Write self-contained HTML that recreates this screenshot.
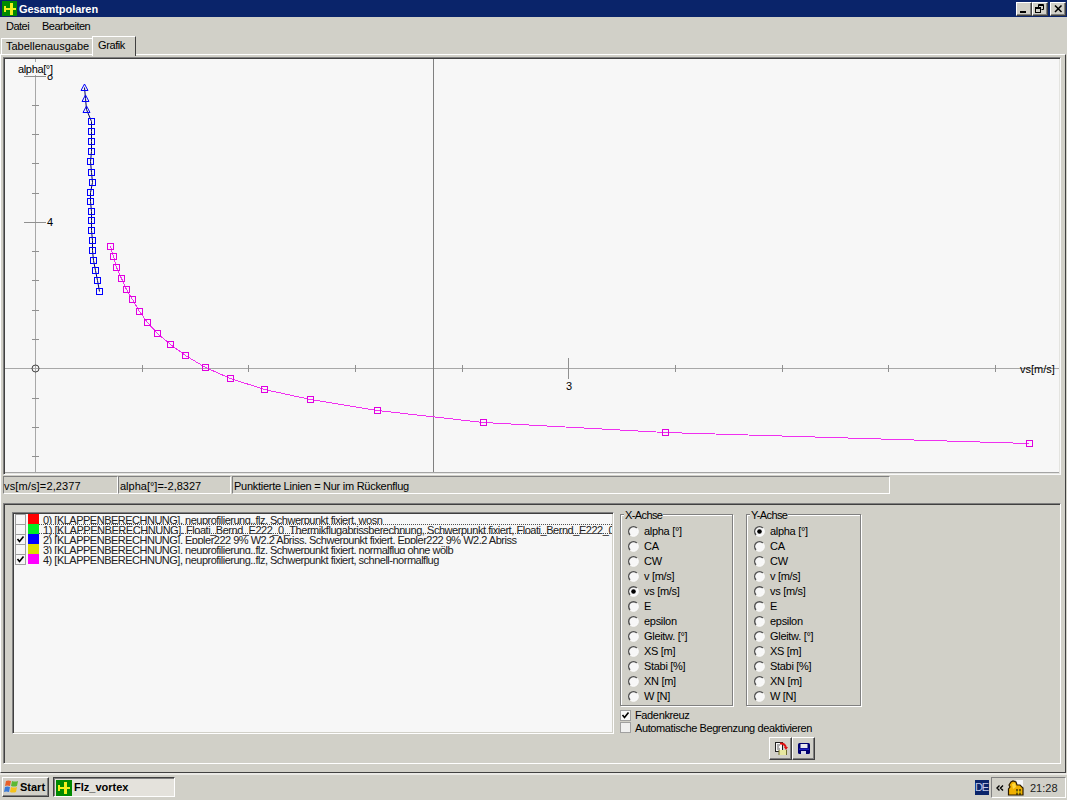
<!DOCTYPE html>
<html><head><meta charset="utf-8">
<style>
*{margin:0;padding:0;box-sizing:border-box}
html,body{width:1067px;height:800px;overflow:hidden;background:#d1d0c8;font-family:"Liberation Sans",sans-serif;font-size:11px;color:#000;position:relative}
.a{position:absolute}
.t{position:absolute;white-space:nowrap;line-height:13px}
#title{left:0;top:0;width:1067px;height:17px;background:#0a246a}
.wb{position:absolute;top:2px;width:16px;height:14px;background:#d1d0c8;border-top:1px solid #fff;border-left:1px solid #fff;border-right:1px solid #404040;border-bottom:1px solid #404040;box-shadow:inset -1px -1px 0 #808080}
.sunk{border-top:1px solid #808080;border-left:1px solid #808080;border-bottom:1px solid #fff;border-right:1px solid #fff}
.raised{border-top:1px solid #fff;border-left:1px solid #fff;border-bottom:1px solid #404040;border-right:1px solid #404040}
.radio{position:absolute;width:12px;height:12px}
</style></head><body>
<!-- window frame -->
<div id="title" class="a">
  <svg class="a" style="left:2px;top:1px" width="15" height="15"><rect x="0" y="0" width="15" height="15" fill="#008a00"/><rect x="8" y="2" width="3" height="12" fill="#f0f020"/><rect x="2" y="7" width="12" height="2" fill="#f0f020"/><rect x="2" y="5" width="2" height="6" fill="#f0f020"/></svg>
  <div class="t" style="left:19px;top:3px;color:#fff;font-weight:bold;font-size:11px;letter-spacing:-0.08px">Gesamtpolaren</div>
  <div class="wb" style="left:1016px"><div class="a" style="left:3px;top:8px;width:6px;height:2px;background:#000"></div></div>
  <div class="wb" style="left:1032px"><svg class="a" style="left:2px;top:1px" width="10" height="10"><path d="M3.5 3 V0.5 H8.5 V5.5 H6.5" fill="none" stroke="#000"/><path d="M3 1.5 H8" stroke="#000"/><rect x="0.5" y="3.5" width="5" height="5" fill="none" stroke="#000"/><path d="M0 4.5 H6" stroke="#000"/></svg></div>
  <div class="wb" style="left:1050px"><svg class="a" style="left:3px;top:2px" width="9" height="8"><path d="M1 0.5 L7.5 7 M7.5 0.5 L1 7" stroke="#000" stroke-width="1.5"/></svg></div>
</div>
<!-- menu -->
<div class="t" style="left:6px;top:20px;letter-spacing:-0.5px">Datei</div>
<div class="t" style="left:42px;top:20px;letter-spacing:-0.5px">Bearbeiten</div>
<!-- tab panel -->
<div class="a" style="left:0px;top:54px;width:1066px;height:719px;border-top:1px solid #fff;border-left:1px solid #fff;border-right:1px solid #404040;border-bottom:1px solid #404040"></div>
<!-- tabs -->
<div class="a" style="left:1px;top:38px;width:91px;height:17px;border-top:1px solid #fff;border-left:1px solid #fff"></div>
<div class="t" style="left:6px;top:40px">Tabellenausgabe</div>
<div class="a" style="left:92px;top:36px;width:44px;height:20px;background:#d1d0c8;border-top:1px solid #fff;border-left:1px solid #fff;border-right:1px solid #404040"></div>
<div class="t" style="left:98px;top:39px;letter-spacing:-0.4px">Grafik</div>
<!-- plot -->
<div class="a" style="left:3px;top:57px;width:1058px;height:418px;background:#f7f7f7;border-top:1px solid #808080;border-left:1px solid #808080;border-right:1px solid #fafafa;border-bottom:1px solid #fafafa;box-shadow:inset 1px 1px 0 #404040, inset -1px -1px 0 #e4e4e0"></div>
<svg class="a" style="left:0;top:0" width="1067" height="800" viewBox="0 0 1067 800" font-family="Liberation Sans, sans-serif"><defs><clipPath id="pc"><rect x="5" y="59" width="1054" height="414"/></clipPath></defs><g clip-path="url(#pc)">
<g stroke="#a8a8a8" stroke-width="1" shape-rendering="crispEdges">
<line x1="35.5" y1="59" x2="35.5" y2="473"/>
<line x1="5" y1="368.5" x2="1060" y2="368.5"/>
</g>
<line x1="433.5" y1="59" x2="433.5" y2="473" stroke="#808080" shape-rendering="crispEdges"/>
<line x1="5" y1="472.5" x2="1059" y2="472.5" stroke="#a4a4a4" shape-rendering="crispEdges"/>
<g stroke="#909090" shape-rendering="crispEdges">
<line x1="32" y1="105.5" x2="39" y2="105.5"/>
<line x1="32" y1="134.5" x2="39" y2="134.5"/>
<line x1="32" y1="163.5" x2="39" y2="163.5"/>
<line x1="32" y1="193.5" x2="39" y2="193.5"/>
<line x1="32" y1="251.5" x2="39" y2="251.5"/>
<line x1="32" y1="280.5" x2="39" y2="280.5"/>
<line x1="32" y1="310.5" x2="39" y2="310.5"/>
<line x1="32" y1="339.5" x2="39" y2="339.5"/>
<line x1="32" y1="398.5" x2="39" y2="398.5"/>
<line x1="32" y1="427.5" x2="39" y2="427.5"/>
<line x1="32" y1="456.5" x2="39" y2="456.5"/>
<line x1="24" y1="76.5" x2="46" y2="76.5"/>
<line x1="24" y1="222.5" x2="46" y2="222.5"/>
<line x1="142.5" y1="365" x2="142.5" y2="372"/>
<line x1="248.5" y1="365" x2="248.5" y2="372"/>
<line x1="355.5" y1="365" x2="355.5" y2="372"/>
<line x1="462.5" y1="365" x2="462.5" y2="372"/>
<line x1="675.5" y1="365" x2="675.5" y2="372"/>
<line x1="782.5" y1="365" x2="782.5" y2="372"/>
<line x1="888.5" y1="365" x2="888.5" y2="372"/>
<line x1="995.5" y1="365" x2="995.5" y2="372"/>
<line x1="568.5" y1="358" x2="568.5" y2="379"/>
</g>
<circle cx="35.5" cy="368.5" r="3.5" fill="none" stroke="#404040"/>
<text x="47" y="80" font-size="11" fill="#000">8</text>
<rect x="17" y="62" width="36" height="13" fill="#f7f7f7"/>
<text x="18" y="73" font-size="11" fill="#000" letter-spacing="-0.35">alpha[°]</text>
<text x="47" y="226" font-size="11" fill="#000">4</text>
<text x="566" y="390" font-size="11" fill="#000">3</text>
<text x="1020" y="373" font-size="11" fill="#000">vs[m/s]</text>
<polyline fill="none" stroke="#000060" stroke-width="1" points="84.5,87.5 85.5,98.5 86.5,109.5 91.5,121.5 91.5,131.5 91.5,141.5 91.5,151.5 90.5,161.5 91.5,172.5 92.5,182.5 90.5,192.5 90.5,201.5 91.5,211.5 91.5,220.5 91.5,230.5 92.5,240.5 92.5,250.5 93.5,260.5 95.5,270.5 97.5,280.5 99.5,291.5"/>
<g fill="none" stroke="#0000ff" stroke-width="1" shape-rendering="crispEdges">
<rect x="88.5" y="118.5" width="6" height="6"/>
<rect x="88.5" y="128.5" width="6" height="6"/>
<rect x="88.5" y="138.5" width="6" height="6"/>
<rect x="88.5" y="148.5" width="6" height="6"/>
<rect x="87.5" y="158.5" width="6" height="6"/>
<rect x="88.5" y="169.5" width="6" height="6"/>
<rect x="89.5" y="179.5" width="6" height="6"/>
<rect x="87.5" y="189.5" width="6" height="6"/>
<rect x="87.5" y="198.5" width="6" height="6"/>
<rect x="88.5" y="208.5" width="6" height="6"/>
<rect x="88.5" y="217.5" width="6" height="6"/>
<rect x="88.5" y="227.5" width="6" height="6"/>
<rect x="89.5" y="237.5" width="6" height="6"/>
<rect x="89.5" y="247.5" width="6" height="6"/>
<rect x="90.5" y="257.5" width="6" height="6"/>
<rect x="92.5" y="267.5" width="6" height="6"/>
<rect x="94.5" y="277.5" width="6" height="6"/>
<rect x="96.5" y="288.5" width="6" height="6"/>
</g>
<g fill="none" stroke="#0000ff" stroke-width="1">
<polygon points="84.5,84.0 81.0,90.5 88.0,90.5"/>
<polygon points="85.5,95.0 82.0,101.5 89.0,101.5"/>
<polygon points="86.5,106.0 83.0,112.5 90.0,112.5"/>
</g>
<g fill="none" stroke="#e000e0" stroke-width="1" shape-rendering="crispEdges">
<polyline fill="none" stroke="#f030f0" stroke-width="1" points="110.5,246.5 113.5,256.5 116.5,267.5 121.5,278.5 126.5,289.5 132.5,299.5 139.5,311.5 147.5,322.5 157.5,333.5 170.5,344.5 185.5,355.5 205.5,367.5 230.5,378.5 264.5,389.5 310.5,399.5 377.5,410.5 483.5,422.5 665.5,432.5 1029.5,443.5"/>
<rect x="107.5" y="243.5" width="6" height="6"/>
<rect x="110.5" y="253.5" width="6" height="6"/>
<rect x="113.5" y="264.5" width="6" height="6"/>
<rect x="118.5" y="275.5" width="6" height="6"/>
<rect x="123.5" y="286.5" width="6" height="6"/>
<rect x="129.5" y="296.5" width="6" height="6"/>
<rect x="136.5" y="308.5" width="6" height="6"/>
<rect x="144.5" y="319.5" width="6" height="6"/>
<rect x="154.5" y="330.5" width="6" height="6"/>
<rect x="167.5" y="341.5" width="6" height="6"/>
<rect x="182.5" y="352.5" width="6" height="6"/>
<rect x="202.5" y="364.5" width="6" height="6"/>
<rect x="227.5" y="375.5" width="6" height="6"/>
<rect x="261.5" y="386.5" width="6" height="6"/>
<rect x="307.5" y="396.5" width="6" height="6"/>
<rect x="374.5" y="407.5" width="6" height="6"/>
<rect x="480.5" y="419.5" width="6" height="6"/>
<rect x="662.5" y="429.5" width="6" height="6"/>
<rect x="1026.5" y="440.5" width="6" height="6"/>
</g>
</g></svg>
<!-- status panels -->
<div class="a sunk" style="left:3px;top:476px;width:115px;height:18px"></div>
<div class="t" style="left:4px;top:480px;letter-spacing:0.14px">vs[m/s]=2,2377</div>
<div class="a sunk" style="left:118px;top:476px;width:113px;height:18px"></div>
<div class="t" style="left:120px;top:480px">alpha[°]=-2,8327</div>
<div class="a sunk" style="left:232px;top:476px;width:658px;height:18px"></div>
<div class="t" style="left:234px;top:480px;letter-spacing:-0.27px">Punktierte Linien = Nur im Rückenflug</div>
<!-- bottom panel -->
<div class="a" style="left:3px;top:503px;width:1058px;height:261px;border-top:1px solid #808080;border-left:1px solid #808080;border-right:1px solid #fff;border-bottom:1px solid #fff;box-shadow:inset 1px 1px 0 #404040"></div>
<!-- list box -->
<div class="a" style="left:12px;top:512px;width:602px;height:222px;background:#f7f7f7;border-top:1px solid #808080;border-left:1px solid #808080;border-right:1px solid #fff;border-bottom:1px solid #fff;box-shadow:inset 1px 1px 0 #404040, inset -1px -1px 0 #d1d0c8"></div>
<div class="a" style="left:14px;top:514px;width:598px;height:218px;overflow:hidden">
<div class="a" style="left:1px;top:0px;width:11px;height:11px;border:1px solid #a0a0a0;background:#f7f7f7"></div>
<div class="a" style="left:14px;top:0px;width:11px;height:10px;background:#ff0000"></div>
<div class="a" style="left:1px;top:10px;width:11px;height:11px;border:1px solid #a0a0a0;background:#f7f7f7"></div>
<div class="a" style="left:14px;top:10px;width:11px;height:10px;background:#00ee22"></div>
<div class="a" style="left:1px;top:20px;width:11px;height:11px;border:1px solid #a0a0a0;background:#f7f7f7"></div>
<svg class="a" style="left:2px;top:21px" width="9" height="9"><path d="M1.5 4 L3.5 6.5 L7.5 1.5" fill="none" stroke="#000" stroke-width="1.6"/></svg>
<div class="a" style="left:14px;top:20px;width:11px;height:10px;background:#0000ff"></div>
<div class="a" style="left:1px;top:30px;width:11px;height:11px;border:1px solid #a0a0a0;background:#f7f7f7"></div>
<div class="a" style="left:14px;top:30px;width:11px;height:10px;background:#dddd00"></div>
<div class="a" style="left:1px;top:40px;width:11px;height:11px;border:1px solid #a0a0a0;background:#f7f7f7"></div>
<svg class="a" style="left:2px;top:41px" width="9" height="9"><path d="M1.5 4 L3.5 6.5 L7.5 1.5" fill="none" stroke="#000" stroke-width="1.6"/></svg>
<div class="a" style="left:14px;top:40px;width:11px;height:10px;background:#ff00ff"></div>
<div class="a" style="left:28px;top:0px;width:570px;height:10px;overflow:hidden"><div class="t" style="left:1px;top:0px;color:#202020;letter-spacing:-0.5px">0) [KLAPPENBERECHNUNG]. neuprofilierung..flz, Schwerpunkt fixiert, wosn</div></div>
<div class="a" style="left:28px;top:10px;width:570px;height:14px;overflow:hidden"><div class="t" style="left:1px;top:0px;color:#202020;letter-spacing:-0.46px">1) [KLAPPENBERECHNUNG]. Floati_Bernd_E222_0_Thermikflugabrissberechnung, Schwerpunkt fixiert, Floati_Bernd_E222_0_Thermikflug</div></div>
<div class="a" style="left:28px;top:20px;width:570px;height:10px;overflow:hidden"><div class="t" style="left:1px;top:0px;color:#202020;letter-spacing:-0.5px">2) [KLAPPENBERECHNUNG]. Eppler222 9% W2,2 Abriss, Schwerpunkt fixiert, Eppler222 9% W2,2 Abriss</div></div>
<div class="a" style="left:28px;top:30px;width:570px;height:10px;overflow:hidden"><div class="t" style="left:1px;top:0px;color:#202020;letter-spacing:-0.5px">3) [KLAPPENBERECHNUNG]. neuprofilierung..flz, Schwerpunkt fixiert, normalflug ohne wölb</div></div>
<div class="a" style="left:28px;top:40px;width:570px;height:14px;overflow:hidden"><div class="t" style="left:1px;top:0px;color:#202020;letter-spacing:-0.5px">4) [KLAPPENBERECHNUNG], neuprofilierung..flz, Schwerpunkt fixiert, schnell-normalflug</div></div>
<div class="a" style="left:25px;top:10px;width:573px;height:10px;border-top:1px dotted #505050;border-bottom:1px dotted #505050"></div>
</div>
<div class="a" style="left:620px;top:514px;width:113px;height:192px;border:1px solid #808080;box-shadow:inset 1px 1px 0 #fff, 1px 1px 0 #fff"></div>
<div class="t" style="left:624px;top:509px;background:#d1d0c8;padding:0 1px;letter-spacing:-0.6px">X-Achse</div>
<svg class="a" style="left:620px;top:520px" width="30" height="190">
<circle cx="13.5" cy="11.5" r="4.8" fill="#f7f7f7"/>
<path d="M10.1 14.9 A4.8 4.8 0 0 1 16.9 8.1" fill="none" stroke="#505050" stroke-width="1.4"/>
<path d="M16.9 8.1 A4.8 4.8 0 0 1 10.1 14.9" fill="none" stroke="#ffffff" stroke-width="1"/>
<circle cx="13.5" cy="26.5" r="4.8" fill="#f7f7f7"/>
<path d="M10.1 29.9 A4.8 4.8 0 0 1 16.9 23.1" fill="none" stroke="#505050" stroke-width="1.4"/>
<path d="M16.9 23.1 A4.8 4.8 0 0 1 10.1 29.9" fill="none" stroke="#ffffff" stroke-width="1"/>
<circle cx="13.5" cy="41.5" r="4.8" fill="#f7f7f7"/>
<path d="M10.1 44.9 A4.8 4.8 0 0 1 16.9 38.1" fill="none" stroke="#505050" stroke-width="1.4"/>
<path d="M16.9 38.1 A4.8 4.8 0 0 1 10.1 44.9" fill="none" stroke="#ffffff" stroke-width="1"/>
<circle cx="13.5" cy="56.5" r="4.8" fill="#f7f7f7"/>
<path d="M10.1 59.9 A4.8 4.8 0 0 1 16.9 53.1" fill="none" stroke="#505050" stroke-width="1.4"/>
<path d="M16.9 53.1 A4.8 4.8 0 0 1 10.1 59.9" fill="none" stroke="#ffffff" stroke-width="1"/>
<circle cx="13.5" cy="71.5" r="4.8" fill="#f7f7f7"/>
<path d="M10.1 74.9 A4.8 4.8 0 0 1 16.9 68.1" fill="none" stroke="#505050" stroke-width="1.4"/>
<path d="M16.9 68.1 A4.8 4.8 0 0 1 10.1 74.9" fill="none" stroke="#ffffff" stroke-width="1"/>
<circle cx="13.5" cy="71.5" r="2.3" fill="#000"/>
<circle cx="13.5" cy="86.5" r="4.8" fill="#f7f7f7"/>
<path d="M10.1 89.9 A4.8 4.8 0 0 1 16.9 83.1" fill="none" stroke="#505050" stroke-width="1.4"/>
<path d="M16.9 83.1 A4.8 4.8 0 0 1 10.1 89.9" fill="none" stroke="#ffffff" stroke-width="1"/>
<circle cx="13.5" cy="101.5" r="4.8" fill="#f7f7f7"/>
<path d="M10.1 104.9 A4.8 4.8 0 0 1 16.9 98.1" fill="none" stroke="#505050" stroke-width="1.4"/>
<path d="M16.9 98.1 A4.8 4.8 0 0 1 10.1 104.9" fill="none" stroke="#ffffff" stroke-width="1"/>
<circle cx="13.5" cy="116.5" r="4.8" fill="#f7f7f7"/>
<path d="M10.1 119.9 A4.8 4.8 0 0 1 16.9 113.1" fill="none" stroke="#505050" stroke-width="1.4"/>
<path d="M16.9 113.1 A4.8 4.8 0 0 1 10.1 119.9" fill="none" stroke="#ffffff" stroke-width="1"/>
<circle cx="13.5" cy="131.5" r="4.8" fill="#f7f7f7"/>
<path d="M10.1 134.9 A4.8 4.8 0 0 1 16.9 128.1" fill="none" stroke="#505050" stroke-width="1.4"/>
<path d="M16.9 128.1 A4.8 4.8 0 0 1 10.1 134.9" fill="none" stroke="#ffffff" stroke-width="1"/>
<circle cx="13.5" cy="146.5" r="4.8" fill="#f7f7f7"/>
<path d="M10.1 149.9 A4.8 4.8 0 0 1 16.9 143.1" fill="none" stroke="#505050" stroke-width="1.4"/>
<path d="M16.9 143.1 A4.8 4.8 0 0 1 10.1 149.9" fill="none" stroke="#ffffff" stroke-width="1"/>
<circle cx="13.5" cy="161.5" r="4.8" fill="#f7f7f7"/>
<path d="M10.1 164.9 A4.8 4.8 0 0 1 16.9 158.1" fill="none" stroke="#505050" stroke-width="1.4"/>
<path d="M16.9 158.1 A4.8 4.8 0 0 1 10.1 164.9" fill="none" stroke="#ffffff" stroke-width="1"/>
<circle cx="13.5" cy="176.5" r="4.8" fill="#f7f7f7"/>
<path d="M10.1 179.9 A4.8 4.8 0 0 1 16.9 173.1" fill="none" stroke="#505050" stroke-width="1.4"/>
<path d="M16.9 173.1 A4.8 4.8 0 0 1 10.1 179.9" fill="none" stroke="#ffffff" stroke-width="1"/>
</svg>
<div class="t" style="left:644px;top:524.5px;letter-spacing:-0.3px">alpha [°]</div>
<div class="t" style="left:644px;top:539.5px;letter-spacing:-0.3px">CA</div>
<div class="t" style="left:644px;top:554.5px;letter-spacing:-0.3px">CW</div>
<div class="t" style="left:644px;top:569.5px;letter-spacing:-0.3px">v [m/s]</div>
<div class="t" style="left:644px;top:584.5px;letter-spacing:-0.3px">vs [m/s]</div>
<div class="t" style="left:644px;top:599.5px;letter-spacing:-0.3px">E</div>
<div class="t" style="left:644px;top:614.5px;letter-spacing:-0.3px">epsilon</div>
<div class="t" style="left:644px;top:629.5px;letter-spacing:-0.3px">Gleitw. [°]</div>
<div class="t" style="left:644px;top:644.5px;letter-spacing:-0.3px">XS [m]</div>
<div class="t" style="left:644px;top:659.5px;letter-spacing:-0.3px">Stabi [%]</div>
<div class="t" style="left:644px;top:674.5px;letter-spacing:-0.3px">XN [m]</div>
<div class="t" style="left:644px;top:689.5px;letter-spacing:-0.3px">W [N]</div>
<div class="a" style="left:746px;top:514px;width:115px;height:192px;border:1px solid #808080;box-shadow:inset 1px 1px 0 #fff, 1px 1px 0 #fff"></div>
<div class="t" style="left:750px;top:509px;background:#d1d0c8;padding:0 1px;letter-spacing:-0.6px">Y-Achse</div>
<svg class="a" style="left:746px;top:520px" width="30" height="190">
<circle cx="13.5" cy="11.5" r="4.8" fill="#f7f7f7"/>
<path d="M10.1 14.9 A4.8 4.8 0 0 1 16.9 8.1" fill="none" stroke="#505050" stroke-width="1.4"/>
<path d="M16.9 8.1 A4.8 4.8 0 0 1 10.1 14.9" fill="none" stroke="#ffffff" stroke-width="1"/>
<circle cx="13.5" cy="11.5" r="2.3" fill="#000"/>
<circle cx="13.5" cy="26.5" r="4.8" fill="#f7f7f7"/>
<path d="M10.1 29.9 A4.8 4.8 0 0 1 16.9 23.1" fill="none" stroke="#505050" stroke-width="1.4"/>
<path d="M16.9 23.1 A4.8 4.8 0 0 1 10.1 29.9" fill="none" stroke="#ffffff" stroke-width="1"/>
<circle cx="13.5" cy="41.5" r="4.8" fill="#f7f7f7"/>
<path d="M10.1 44.9 A4.8 4.8 0 0 1 16.9 38.1" fill="none" stroke="#505050" stroke-width="1.4"/>
<path d="M16.9 38.1 A4.8 4.8 0 0 1 10.1 44.9" fill="none" stroke="#ffffff" stroke-width="1"/>
<circle cx="13.5" cy="56.5" r="4.8" fill="#f7f7f7"/>
<path d="M10.1 59.9 A4.8 4.8 0 0 1 16.9 53.1" fill="none" stroke="#505050" stroke-width="1.4"/>
<path d="M16.9 53.1 A4.8 4.8 0 0 1 10.1 59.9" fill="none" stroke="#ffffff" stroke-width="1"/>
<circle cx="13.5" cy="71.5" r="4.8" fill="#f7f7f7"/>
<path d="M10.1 74.9 A4.8 4.8 0 0 1 16.9 68.1" fill="none" stroke="#505050" stroke-width="1.4"/>
<path d="M16.9 68.1 A4.8 4.8 0 0 1 10.1 74.9" fill="none" stroke="#ffffff" stroke-width="1"/>
<circle cx="13.5" cy="86.5" r="4.8" fill="#f7f7f7"/>
<path d="M10.1 89.9 A4.8 4.8 0 0 1 16.9 83.1" fill="none" stroke="#505050" stroke-width="1.4"/>
<path d="M16.9 83.1 A4.8 4.8 0 0 1 10.1 89.9" fill="none" stroke="#ffffff" stroke-width="1"/>
<circle cx="13.5" cy="101.5" r="4.8" fill="#f7f7f7"/>
<path d="M10.1 104.9 A4.8 4.8 0 0 1 16.9 98.1" fill="none" stroke="#505050" stroke-width="1.4"/>
<path d="M16.9 98.1 A4.8 4.8 0 0 1 10.1 104.9" fill="none" stroke="#ffffff" stroke-width="1"/>
<circle cx="13.5" cy="116.5" r="4.8" fill="#f7f7f7"/>
<path d="M10.1 119.9 A4.8 4.8 0 0 1 16.9 113.1" fill="none" stroke="#505050" stroke-width="1.4"/>
<path d="M16.9 113.1 A4.8 4.8 0 0 1 10.1 119.9" fill="none" stroke="#ffffff" stroke-width="1"/>
<circle cx="13.5" cy="131.5" r="4.8" fill="#f7f7f7"/>
<path d="M10.1 134.9 A4.8 4.8 0 0 1 16.9 128.1" fill="none" stroke="#505050" stroke-width="1.4"/>
<path d="M16.9 128.1 A4.8 4.8 0 0 1 10.1 134.9" fill="none" stroke="#ffffff" stroke-width="1"/>
<circle cx="13.5" cy="146.5" r="4.8" fill="#f7f7f7"/>
<path d="M10.1 149.9 A4.8 4.8 0 0 1 16.9 143.1" fill="none" stroke="#505050" stroke-width="1.4"/>
<path d="M16.9 143.1 A4.8 4.8 0 0 1 10.1 149.9" fill="none" stroke="#ffffff" stroke-width="1"/>
<circle cx="13.5" cy="161.5" r="4.8" fill="#f7f7f7"/>
<path d="M10.1 164.9 A4.8 4.8 0 0 1 16.9 158.1" fill="none" stroke="#505050" stroke-width="1.4"/>
<path d="M16.9 158.1 A4.8 4.8 0 0 1 10.1 164.9" fill="none" stroke="#ffffff" stroke-width="1"/>
<circle cx="13.5" cy="176.5" r="4.8" fill="#f7f7f7"/>
<path d="M10.1 179.9 A4.8 4.8 0 0 1 16.9 173.1" fill="none" stroke="#505050" stroke-width="1.4"/>
<path d="M16.9 173.1 A4.8 4.8 0 0 1 10.1 179.9" fill="none" stroke="#ffffff" stroke-width="1"/>
</svg>
<div class="t" style="left:770px;top:524.5px;letter-spacing:-0.3px">alpha [°]</div>
<div class="t" style="left:770px;top:539.5px;letter-spacing:-0.3px">CA</div>
<div class="t" style="left:770px;top:554.5px;letter-spacing:-0.3px">CW</div>
<div class="t" style="left:770px;top:569.5px;letter-spacing:-0.3px">v [m/s]</div>
<div class="t" style="left:770px;top:584.5px;letter-spacing:-0.3px">vs [m/s]</div>
<div class="t" style="left:770px;top:599.5px;letter-spacing:-0.3px">E</div>
<div class="t" style="left:770px;top:614.5px;letter-spacing:-0.3px">epsilon</div>
<div class="t" style="left:770px;top:629.5px;letter-spacing:-0.3px">Gleitw. [°]</div>
<div class="t" style="left:770px;top:644.5px;letter-spacing:-0.3px">XS [m]</div>
<div class="t" style="left:770px;top:659.5px;letter-spacing:-0.3px">Stabi [%]</div>
<div class="t" style="left:770px;top:674.5px;letter-spacing:-0.3px">XN [m]</div>
<div class="t" style="left:770px;top:689.5px;letter-spacing:-0.3px">W [N]</div>
<div class="a" style="left:620px;top:710px;width:11px;height:11px;border:1px solid #a0a0a0;background:#f7f7f7"></div>
<svg class="a" style="left:621px;top:711px" width="9" height="9"><path d="M1.5 4 L3.5 6.5 L7.5 1.5" fill="none" stroke="#000" stroke-width="1.6"/></svg>
<div class="t" style="left:635px;top:709px;letter-spacing:-0.36px">Fadenkreuz</div>
<div class="a" style="left:620px;top:722px;width:11px;height:11px;border:1px solid #a0a0a0;background:#f0f0f0"></div>
<div class="t" style="left:635px;top:722px;letter-spacing:-0.4px">Automatische Begrenzung deaktivieren</div>
<div class="a" style="left:769px;top:737px;width:23px;height:23px;background:#d1d0c8;border-top:1px solid #fff;border-left:1px solid #fff;border-right:1px solid #404040;border-bottom:1px solid #404040;box-shadow:inset -1px -1px 0 #808080"></div>
<div class="a" style="left:792px;top:737px;width:23px;height:23px;background:#d1d0c8;border-top:1px solid #fff;border-left:1px solid #fff;border-right:1px solid #404040;border-bottom:1px solid #404040;box-shadow:inset -1px -1px 0 #808080"></div>
<svg class="a" style="left:774px;top:742px" width="15" height="14"><rect x="1.5" y="0.5" width="7" height="9" fill="#f8f8f8" stroke="#202020"/><path d="M3 3h3M3 5h2M3 7h3" stroke="#606060"/><path d="M6 1.5 Q11 1 12 6" fill="none" stroke="#e01010" stroke-width="2"/><path d="M10 5 L14 5 L12 8 Z" fill="#e01010"/><rect x="5" y="8" width="8" height="5" fill="#e8e8a0"/><path d="M5 8v5M12.5 8v5" stroke="#707030"/></svg>
<svg class="a" style="left:798px;top:743px" width="12" height="12"><rect x="0" y="0" width="12" height="11" rx="1.5" fill="#000070"/><rect x="2.5" y="1" width="7" height="4" fill="#e8e8f0"/><rect x="1" y="5.5" width="10" height="1.5" fill="#2020c0"/><rect x="3" y="8" width="5" height="3" fill="#d8d8e8"/></svg>
<!-- taskbar -->
<div class="a" style="left:0;top:773px;width:1067px;height:27px;background:#d1d0c8;border-top:2px solid #ebeae6"></div>
<div class="a" style="left:2px;top:777px;width:47px;height:20px;border-top:1px solid #fff;border-left:1px solid #fff;border-right:1px solid #404040;border-bottom:1px solid #404040;box-shadow:inset -1px -1px 0 #808080"></div>
<svg class="a" style="left:4px;top:779px" width="15" height="15"><path d="M2 2 Q4 1 7 2 L6 7 Q3 6 1 7 Z" fill="#e8602a"/><path d="M8 2 Q11 3 14 2 L13 7 Q10 8 7 7 Z" fill="#5cb833"/><path d="M1 8 Q3 7 6 8 L5 13 Q2 12 0 13 Z" fill="#3a7ad8"/><path d="M7 8 Q10 9 13 8 L12 13 Q9 14 6 13 Z" fill="#f5c21a"/></svg>
<div class="t" style="left:20px;top:781px;font-weight:bold">Start</div>
<div class="a" style="left:53px;top:777px;width:122px;height:20px;background:#e4e2dc;border-top:1px solid #404040;border-left:1px solid #404040;border-right:1px solid #fff;border-bottom:1px solid #fff;box-shadow:inset 1px 1px 0 #808080"></div>
<svg class="a" style="left:56px;top:780px" width="16" height="16"><rect x="0" y="0" width="16" height="16" fill="#008a00"/><rect x="8" y="2" width="3" height="12" fill="#f0f020"/><rect x="2" y="7" width="12" height="2" fill="#f0f020"/><rect x="2" y="5" width="2" height="6" fill="#f0f020"/></svg>
<div class="t" style="left:74px;top:781px;font-weight:bold">Flz_vortex</div>
<div class="a" style="left:975px;top:780px;width:14px;height:15px;background:#0a246a"></div>
<div class="t" style="left:975px;top:781px;color:#c0c8e8;font-size:11px;letter-spacing:-1.2px">DE</div>
<div class="a sunk" style="left:991px;top:777px;width:75px;height:21px"></div>
<svg class="a" style="left:996px;top:785px" width="8" height="6"><path d="M3.5 0.5 L1 3 L3.5 5.5 M7 0.5 L4.5 3 L7 5.5" fill="none" stroke="#000" stroke-width="1.4"/></svg>
<svg class="a" style="left:1007px;top:780px" width="17" height="16"><rect x="9" y="0" width="7" height="7" fill="#f4f4f8"/><path d="M1.5 15 L1.5 9 L3 7 L2 5 L4 2 L6 1 L9 2 L10 5 L13 5 L16 8 L16 15 Z" fill="#f0b000" stroke="#2a1a00" stroke-width="1.2"/><path d="M5 4 L8 3 L9 7 L6 9 Z" fill="#ffd840"/><path d="M10 9 L10 15 M13 9 L13 15" stroke="#202000" stroke-width="1.2"/><path d="M9 12 L14 12" stroke="#ffe000" stroke-width="1"/></svg>
<div class="t" style="left:1030px;top:782px;color:#202020">21:28</div>
</body></html>
